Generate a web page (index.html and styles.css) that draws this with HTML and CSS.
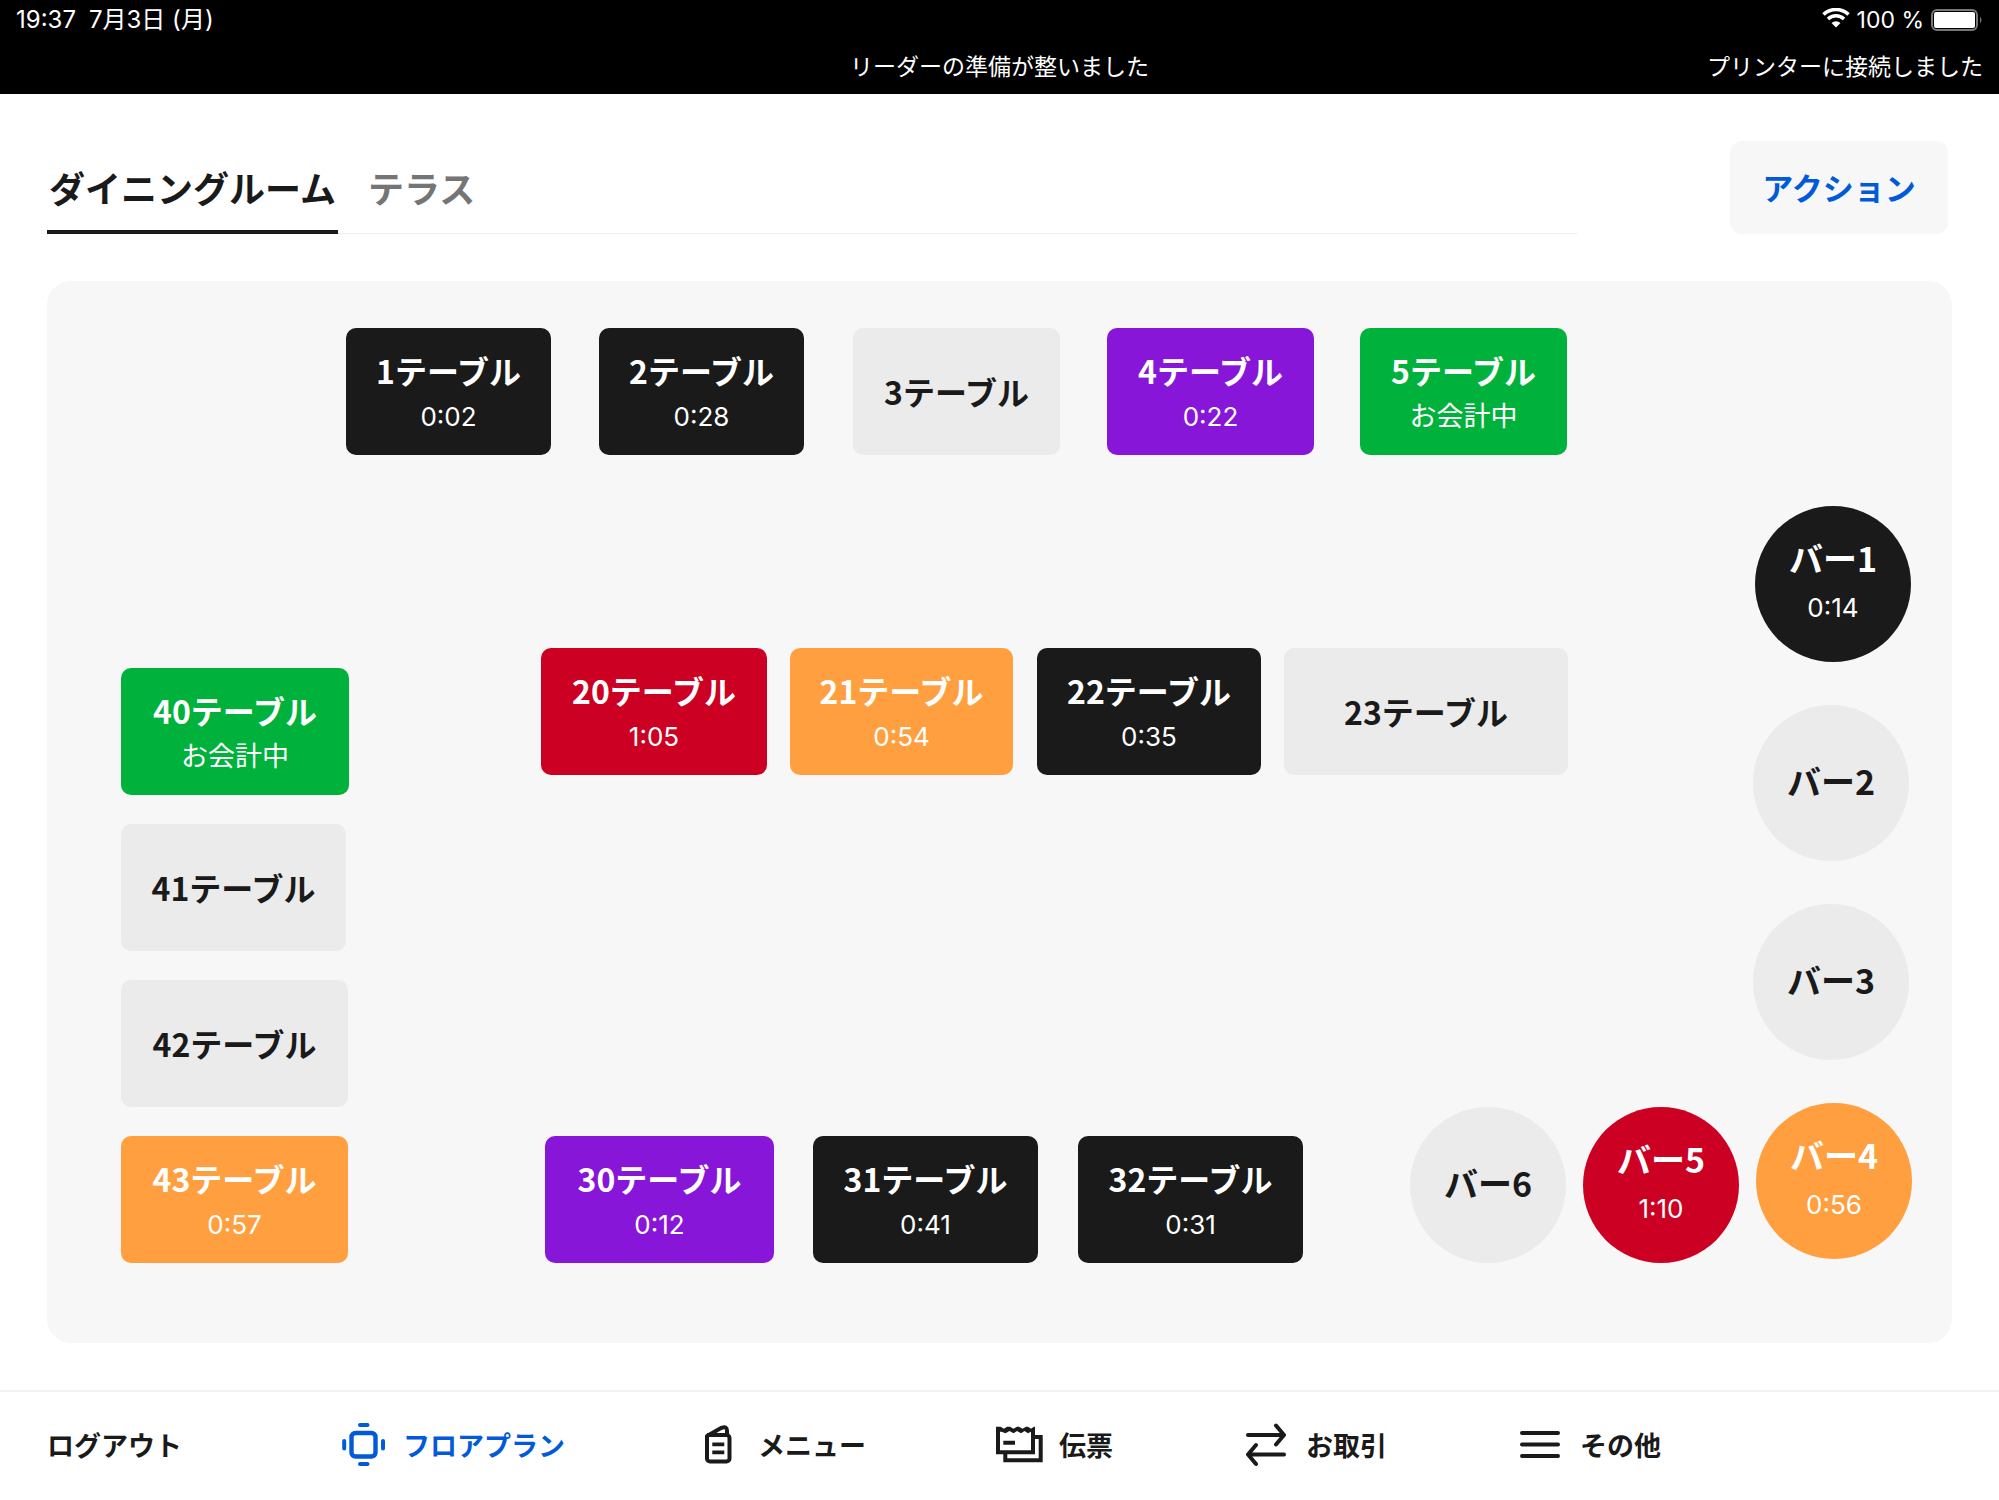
FILE: index.html
```html
<!DOCTYPE html>
<html lang="ja">
<head>
<meta charset="utf-8">
<meta name="viewport" content="width=device-width, initial-scale=1">
<title>フロアプラン</title>
<link rel="stylesheet" href="styles.css">
</head>
<body>
<header class="status">
  <div class="status-row">
    <div class="clock"><time>19:37</time><span>7月3日 (月)</span></div>
    <div class="device">
      <svg class="wifi" viewBox="0 0 28 24" aria-hidden="true"><path d="M1.500 6.500a18 18 0 0 1 25 0M6 11a11.500 11.500 0 0 1 16 0" fill="none" stroke="#fff" stroke-width="3.500"/><path d="M14 19.500l-4.500-4.500a6.500 6.500 0 0 1 9 0z" fill="#fff"/></svg>
      <span class="percent">100 %</span>
      <svg class="battery" viewBox="0 0 52 22" aria-hidden="true"><rect x="1" y="1" width="45" height="20" rx="5" fill="none" stroke="#777" stroke-width="2"/><rect x="3" y="3" width="41" height="16" rx="2" fill="#fff"/><path d="M49 7.500q3 3.500 0 7z" fill="#777"/></svg>
    </div>
  </div>
  <div class="messages">
    <span class="reader">リーダーの準備が整いました</span>
    <span class="printer">プリンターに接続しました</span>
  </div>
</header>
<div class="toolbar">
  <nav class="tabs">
    <a class="tab tab-active" href="#dining">ダイニングルーム</a>
    <a class="tab" href="#terrace">テラス</a>
  </nav>
  <button class="action" type="button">アクション</button>
</div>
<main class="floor">
  <button type="button" class="table black" style="--x:299;--y:47;--w:205"><b>1テーブル</b><small>0:02</small></button>
  <button type="button" class="table black" style="--x:552;--y:47;--w:205"><b>2テーブル</b><small>0:28</small></button>
  <button type="button" class="table" style="--x:806;--y:47;--w:207"><b>3テーブル</b></button>
  <button type="button" class="table purple" style="--x:1060;--y:47;--w:207"><b>4テーブル</b><small>0:22</small></button>
  <button type="button" class="table green" style="--x:1313;--y:47;--w:207"><b>5テーブル</b><small class="paying">お会計中</small></button>
  <button type="button" class="table red" style="--x:494;--y:367;--w:226"><b>20テーブル</b><small>1:05</small></button>
  <button type="button" class="table orange" style="--x:743;--y:367;--w:223"><b>21テーブル</b><small>0:54</small></button>
  <button type="button" class="table black" style="--x:990;--y:367;--w:224"><b>22テーブル</b><small>0:35</small></button>
  <button type="button" class="table" style="--x:1237;--y:367;--w:284"><b>23テーブル</b></button>
  <button type="button" class="table green" style="--x:74;--y:387;--w:228"><b>40テーブル</b><small class="paying">お会計中</small></button>
  <button type="button" class="table" style="--x:74;--y:543;--w:225"><b>41テーブル</b></button>
  <button type="button" class="table" style="--x:74;--y:699;--w:227"><b>42テーブル</b></button>
  <button type="button" class="table orange" style="--x:74;--y:855;--w:227"><b>43テーブル</b><small>0:57</small></button>
  <button type="button" class="table purple" style="--x:498;--y:855;--w:229"><b>30テーブル</b><small>0:12</small></button>
  <button type="button" class="table black" style="--x:766;--y:855;--w:225"><b>31テーブル</b><small>0:41</small></button>
  <button type="button" class="table black" style="--x:1031;--y:855;--w:225"><b>32テーブル</b><small>0:31</small></button>
  <button type="button" class="table bar black" style="--x:1708;--y:225;--w:156"><b>バー1</b><small>0:14</small></button>
  <button type="button" class="table bar" style="--x:1706;--y:424;--w:156"><b>バー2</b></button>
  <button type="button" class="table bar" style="--x:1706;--y:623;--w:156"><b>バー3</b></button>
  <button type="button" class="table bar orange" style="--x:1709;--y:822;--w:156"><b>バー4</b><small>0:56</small></button>
  <button type="button" class="table bar red" style="--x:1536;--y:826;--w:156"><b>バー5</b><small>1:10</small></button>
  <button type="button" class="table bar" style="--x:1363;--y:826;--w:156"><b>バー6</b></button>
</main>
<nav class="bottom">
  <a class="item logout" href="#logout">ログアウト</a>
  <a class="item item-active" href="#floor"><svg class="icon" viewBox="0 0 48 48" aria-hidden="true"><rect x="12.500" y="12" width="24" height="23.500" rx="4" fill="none" stroke="currentColor" stroke-width="4.400"/><path d="M21 4h7.500M21 43h7.500M5.200 20v7.500M44 20v7.500" fill="none" stroke="currentColor" stroke-width="4" stroke-linecap="round"/></svg>フロアプラン</a>
  <a class="item" href="#menu"><svg class="icon" viewBox="0 0 48 48" aria-hidden="true"><path d="M16 14h16.500a3 3 0 0 1 3 3v20.500a3 3 0 0 1-3 3H16a3 3 0 0 1-3-3V15L27.500 6.800q5.500-2 5.500 3V14" fill="none" stroke="currentColor" stroke-width="4" stroke-linejoin="round"/><path d="M13 14h5M18.300 23.300h12M18.300 31.300h12" fill="none" stroke="currentColor" stroke-width="3.800"/></svg>メニュー</a>
  <a class="item" href="#tickets"><svg class="icon" viewBox="0 0 48 48" aria-hidden="true"><path d="M3 8v23.300h35V8M10.300 33v6.200h35.400V16H40M8.300 21.700H20" fill="none" stroke="currentColor" stroke-width="4"/><path d="M1 5.700h4.500l3.500 2 3-2h3l3.500 2 3.500-2h2l3.500 2 3.500-2h2l3 2 3-2H40v5h-4l-3 1.500-3.500-2.200-3.500 2.200-4-2.200-3.500 2.200-4-2.200-4 2.200-4-1.500H1z" fill="currentColor"/></svg>伝票</a>
  <a class="item" href="#transactions"><svg class="icon" viewBox="0 0 48 48" aria-hidden="true"><path d="M6 14h36M34 4.500l8 9.500-8 9.500M42 33.500H6M14 24l-8 9.500 8 9.500" fill="none" stroke="currentColor" stroke-width="4" stroke-linecap="round" stroke-linejoin="round"/></svg>お取引</a>
  <a class="item" href="#more"><svg class="icon" viewBox="0 0 48 48" aria-hidden="true"><path d="M6 12h36M6 23.500h36M6 35h36" fill="none" stroke="currentColor" stroke-width="4" stroke-linecap="round"/></svg>その他</a>
</nav>
</body>
</html>
```
FILE: styles.css
```css
* { box-sizing: border-box; }

body {
  margin: 0;
  min-height: 100vh;
  display: flex;
  flex-direction: column;
  background: #fff;
  color: #1a1a1a;
  font-family: "Noto Sans CJK JP", sans-serif;
}

a { color: inherit; text-decoration: none; }
button { border: 0; padding: 0; font: inherit; color: inherit; cursor: pointer; }

.status {
  height: 94px;
  padding: 0 16px;
  background: #000;
  color: #fff;
  font-family: Inter, "Noto Sans CJK JP", sans-serif;
  font-size: 23px;
}
.status-row { display: flex; justify-content: space-between; height: 40px; line-height: 40px; }
.clock { display: flex; gap: 13px; font-size: 24px; }
.device { display: flex; align-items: center; gap: 7px; }
.wifi { width: 28px; height: 24px; }
.battery { width: 52px; height: 22px; }
.messages {
  display: grid;
  grid-template-columns: 1fr auto 1fr;
  line-height: 54px;
}
.reader { grid-column: 2; }
.printer { text-align: right; }

.toolbar {
  display: flex;
  justify-content: space-between;
  padding: 47px 51px 47px 47px;
}
.tabs {
  display: flex;
  gap: 28px;
  flex: 1;
  margin-right: 152px;
  height: 93px;
  border-bottom: 1px solid #f0f0f0;
}
.tab {
  height: 93px;
  padding: 0 2px;
  border-bottom: 4px solid transparent;
  border-radius: 3px 3px 0 0;
  font-size: 36px;
  font-weight: 700;
  line-height: 92px;
  color: #757575;
}
.tab-active { color: #1a1a1a; border-color: #1a1a1a; }
.action {
  width: 218px;
  height: 93px;
  padding-bottom: 3px;
  border-radius: 12px;
  background: #f7f7f7;
  color: #005ad9;
  font-size: 31px;
  font-weight: 700;
}

.floor {
  position: relative;
  flex: 1;
  min-height: 1062px;
  margin: 0 47px 47px;
  border-radius: 24px;
  background: #f7f7f7;
}
.table {
  position: absolute;
  left: calc(var(--x) / 1905 * 100%);
  top: calc(var(--y) * 1px);
  width: calc(var(--w) * 1px);
  height: 127px;
  display: flex;
  flex-direction: column;
  align-items: center;
  justify-content: center;
  padding-bottom: 2px;
  border-radius: 10px;
  background: #ebebeb;
}
.table b { font-size: 32px; font-weight: 700; line-height: 52px; }
.table small {
  font-family: Inter, "Noto Sans CJK JP", sans-serif;
  font-size: 26px;
  font-weight: 400;
  line-height: 42px;
}
.table .paying { font-size: 27px; }
.table.bar { height: 156px; padding-bottom: 4px; border-radius: 50%; }
.table.bar b { font-size: 34px; }
.table.bar small { line-height: 48px; }
.table.black { background: #1a1a1a; color: #fff; }
.table.purple { background: #8716d9; color: #fff; }
.table.green { background: #00b23b; color: #fff; }
.table.red { background: #cc0023; color: #fff; }
.table.orange { background: #ff9f40; color: #fff; }

.bottom {
  display: flex;
  align-items: center;
  gap: 129px;
  height: 110px;
  padding: 0 47px 3px;
  border-top: 2px solid #f2f2f2;
}
.item {
  display: flex;
  align-items: center;
  gap: 16px;
  font-size: 27px;
  font-weight: 700;
  white-space: nowrap;
}
.logout { margin-right: 28px; }
.item-active { color: #005ad9; }
.icon { width: 48px; height: 48px; }
```
